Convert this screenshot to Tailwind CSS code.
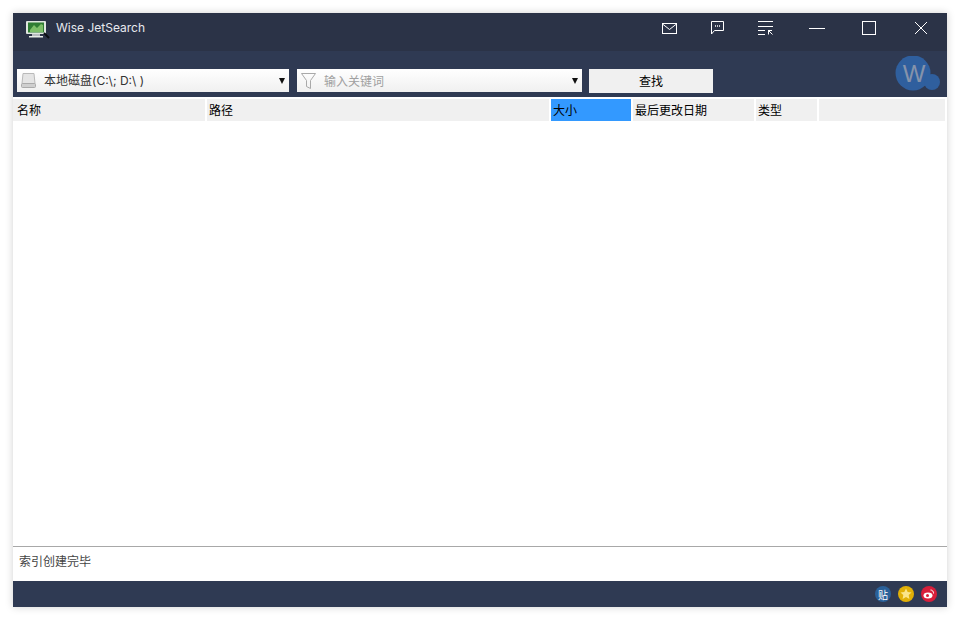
<!DOCTYPE html>
<html lang="en">
<head>
    <meta charset="UTF-8">
    <title>Wise JetSearch</title>
    <script src="https://cdn.jsdelivr.net/npm/@tailwindcss/browser@4"></script>
</head>
<body class="bg-white h-[620px] overflow-hidden pt-[13px] pl-[13px] font-['Noto_Sans_CJK_SC','Liberation_Sans',sans-serif]">
    <div class="w-[934px] h-[594px] flex flex-col bg-white shadow-[0_0_8px_rgba(0,0,0,0.18)]">
        <!-- title bar -->
        <div class="h-[38px] bg-[#2b3347] flex items-center pb-[8px] text-white">
            <svg class="ml-[12px] mt-[4px] w-[26px] h-[20px]" viewBox="0 0 26 20">
                <rect x="1" y="1" width="20" height="13" rx="1" fill="#dfe6df"/>
                <rect x="3" y="2.500" width="16" height="10" fill="#2f7d33"/>
                <path d="M5 10l4-5 3 3 4-4 2 1v7H5z" fill="#7dbf68"/>
                <rect x="7" y="14" width="8" height="2" fill="#b8bcc0"/>
                <rect x="4" y="16" width="14" height="1.500" fill="#e8eee8"/>
                <path d="M19 13l5 5" stroke="#0b0f14" stroke-width="2"/>
            </svg>
            <span class="ml-[5px] text-[12px] text-[#e6e9ee] font-['Inter','Liberation_Sans',sans-serif]">Wise JetSearch</span>
            <div class="ml-auto flex items-center">
                <svg class="w-[15px] h-[11px]" viewBox="0 0 15 11" fill="none" stroke="#fff" stroke-width="1">
                    <rect x="0.500" y="0.500" width="14" height="10"/>
                    <path d="M0.500 1l7 5.500 7-5.500"/>
                </svg>
                <svg class="ml-[34px] w-[13px] h-[14px]" viewBox="0 0 13 14" fill="none" stroke="#fff" stroke-width="1">
                    <path d="M0.500 0.500h12v9h-9l-3 3.500z"/>
                    <path d="M4 5h1M6 5h1M8 5h1" stroke-width="1.500"/>
                </svg>
                <svg class="ml-[34px] w-[15px] h-[14px]" viewBox="0 0 15 14" fill="none" stroke="#fff" stroke-width="1">
                    <path d="M0 0.500h15M0 5.500h15M0 9.500h7M0 13.500h7"/>
                    <path d="M10 9.500h4M10.500 9.500v4M10.500 9.500l4 4"/>
                </svg>
                <div class="ml-[36px] w-[16px] h-px bg-white"></div>
                <div class="ml-[37px] w-[14px] h-[14px] border border-white"></div>
                <svg class="ml-[38px] mr-[19px] w-[14px] h-[14px]" viewBox="0 0 14 14" fill="none" stroke="#fff" stroke-width="1">
                    <path d="M1 1l12 12M13 1L1 13"/>
                </svg>
            </div>
        </div>
        <!-- toolbar -->
        <div class="h-[46px] bg-[#2f3a53] relative flex items-start pt-[18px] pl-[4px]">
            <div class="w-[272px] h-[23px] bg-gradient-to-b from-white to-[#f0f0f0] flex items-center">
                <svg class="ml-[4px] w-[15px] h-[15px]" viewBox="0 0 15 15">
                    <path d="M2 0.500h11l1 10H1z" fill="#e4e4e4" stroke="#b9b9b9"/>
                    <rect x="0.500" y="10.500" width="14" height="4" rx="1" fill="#cfcfcf" stroke="#aaa"/>
                </svg>
                <span class="ml-[8px] text-[12px] text-[#333] font-['Inter','Noto_Sans_CJK_SC',sans-serif]">本地磁盘(C:\; D:\ )</span>
                <svg class="ml-auto mr-[4px] w-[6px] h-[6px]" viewBox="0 0 6 6"><path d="M0 0h6L3 6z" fill="#111"/></svg>
            </div>
            <div class="ml-[8px] w-[285px] h-[23px] bg-gradient-to-b from-white to-[#f0f0f0] flex items-center">
                <svg class="ml-[4px] w-[15px] h-[16px]" viewBox="0 0 15 16" fill="none" stroke="#a9a9a9">
                    <path d="M0.500 0.500h14l-5 7v8l-4-2v-6z"/>
                </svg>
                <span class="ml-[8px] text-[12px] text-[#a0a0a0]">输入关键词</span>
                <svg class="ml-auto mr-[4px] w-[6px] h-[6px]" viewBox="0 0 6 6"><path d="M0 0h6L3 6z" fill="#111"/></svg>
            </div>
            <div class="ml-[7px] w-[124px] h-[24px] bg-[#f0f0f0] flex items-center justify-center text-[12px] text-black">查找</div>
            <svg class="absolute right-[6px] top-[5px] w-[46px] h-[35px]" viewBox="0 0 46 35">
                <circle cx="18" cy="17" r="17.500" fill="#2f5f9e"/>
                <circle cx="37" cy="26" r="8" fill="#2f5f9e"/>
                <text x="19" y="26" text-anchor="middle" font-size="24" fill="#8593ab" font-family="Liberation Sans">W</text>
            </svg>
        </div>
        <!-- table header -->
        <div class="h-[24px] pt-[2px] flex text-[12px] text-black">
            <div class="w-[192px] bg-[#f0f0f0] pl-[4px] leading-[22px]">名称</div>
            <div class="ml-[2px] w-[342px] bg-[#f0f0f0] pl-[2px] leading-[22px]">路径</div>
            <div class="ml-[2px] w-[80px] bg-[#3399ff] pl-[2px] leading-[22px]">大小</div>
            <div class="ml-[2px] w-[121px] bg-[#f0f0f0] pl-[2px] leading-[22px]">最后更改日期</div>
            <div class="ml-[2px] w-[61px] bg-[#f0f0f0] pl-[2px] leading-[22px]">类型</div>
            <div class="ml-[2px] w-[126px] bg-[#f0f0f0]"></div>
        </div>
        <div class="flex-1"></div>
        <!-- status line -->
        <div class="h-[35px] border-t border-[#a8a8a8] pl-[6px] pb-[6px] flex items-center text-[12px] text-[#444]">索引创建完毕</div>
        <!-- footer -->
        <div class="h-[26px] bg-[#2f3a53] flex items-center justify-end pr-[10px] gap-[7px]">
            <div class="w-[16px] h-[16px] rounded-full bg-[#2a6099] flex items-center justify-center text-[10px] text-white">贴</div>
            <svg class="w-[16px] h-[16px]" viewBox="0 0 16 16">
                <circle cx="8" cy="8" r="8" fill="#e2b007"/>
                <path d="M8 2.500l1.700 3.500 3.800.5-2.800 2.600.7 3.800L8 11l-3.400 1.900.7-3.800L2.500 6.500l3.800-.5z" fill="#fbe58a"/>
            </svg>
            <svg class="w-[16px] h-[16px]" viewBox="0 0 16 16">
                <circle cx="8" cy="8" r="8" fill="#d81e3a"/>
                <ellipse cx="7" cy="9.500" rx="4.500" ry="3" fill="#fff"/>
                <circle cx="6.500" cy="9.500" r="1.500" fill="#d81e3a"/>
                <path d="M9.500 4a3 3 0 0 1 3 3.500" fill="none" stroke="#fff" stroke-width="1"/>
            </svg>
        </div>
    </div>
</body>
</html>
